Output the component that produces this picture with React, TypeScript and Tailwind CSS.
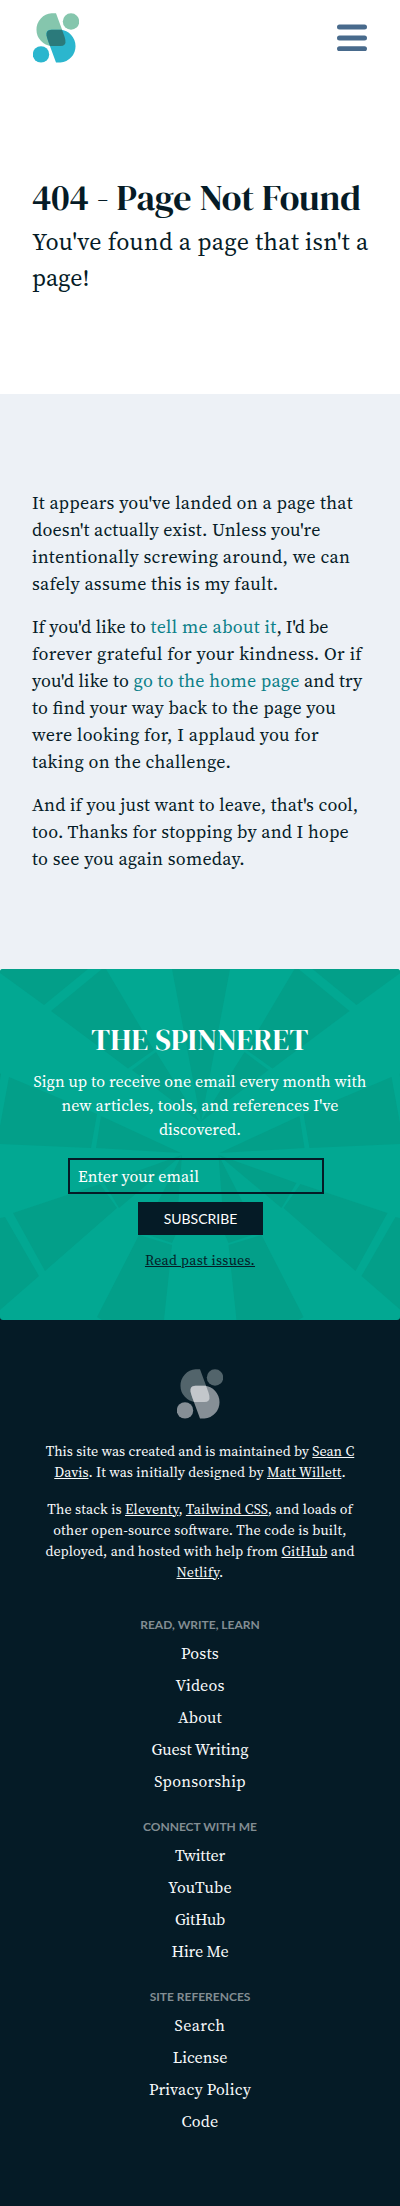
import React from "react";

const serif =
  "font-['Source_Serif_4','Liberation_Serif',serif] [font-feature-settings:'liga'_1]";

function Logo({ top, bottom, overlap }: { top: string; bottom: string; overlap: string }) {
  return (
    <svg viewBox="33 12.5 46 50" className="block h-[50px] w-[46px]" aria-hidden="true">
      <g className={top}>
        <path d="M56 12.8H51.6A16.4 16.4 0 0 0 51.6 45.5H61Q66.5 45.5 65.5 40Q65 37 62 29Z" />
        <circle cx="71" cy="21" r="8.2" />
      </g>
      <g className={bottom}>
        <path d="M56 62H60.4A16.4 16.4 0 0 0 60.4 29.3H51Q45.5 29.3 46.5 34.8Q47 37.8 50 45.8Z" />
        <circle cx="41" cy="53.9" r="8.2" />
      </g>
      <path
        className={overlap}
        d="M51.5 29.3H62Q65 37 65.4 39.5Q66.3 45.5 60.5 45.5H50Q47 37.8 46.6 35.3Q45.7 29.3 51.5 29.3Z"
      />
    </svg>
  );
}

function Line({ t, children }: { t: string; children: React.ReactNode }) {
  return <span className={`block whitespace-nowrap ${t}`}>{children}</span>;
}

const rays = [
  "0,0 88,0 44,36 0,4",
  "102,0 106,0 154,81 128,99.5 51,42",
  "132,101 156,83 200,153",
  "9,108 97,145 91,179 0,175 0,157",
  "0,104 1,105 0,111",
  "101,147 181,184 96,179",
  "104,214 182,186 119,239",
  "13,244 100,215 117,239 45,302",
  "0,249 5,248 39,307 0,341",
  "182,186 176,265 172,274 142,264",
  "139,266 172,276 164,351 102,351 97,348",
];

function Rays() {
  return (
    <svg viewBox="0 0 400 351" className="absolute inset-0 h-full w-full fill-[#039f89]" aria-hidden="true">
      {rays.map((p) => (
        <polygon key={p} points={p} />
      ))}
      <g transform="matrix(-1 0 0 1 400.5 0)">
        {rays.map((p) => (
          <polygon key={p} points={p} />
        ))}
      </g>
      <polygon points="172,0 230,0 201,153" />
    </svg>
  );
}

const sections: { title: string; links: [string, string][] }[] = [
  {
    title: "Read, Write, Learn",
    links: [
      ["Posts", "tracking-[0.2px]"],
      ["Videos", "tracking-[0.16px]"],
      ["About", "tracking-[0.2px]"],
      ["Guest Writing", "tracking-[-0.05px]"],
      ["Sponsorship", "tracking-[0.27px]"],
    ],
  },
  {
    title: "Connect With Me",
    links: [
      ["Twitter", "tracking-[-0.2px]"],
      ["YouTube", "tracking-[0.26px]"],
      ["GitHub", "tracking-[-0.28px]"],
      ["Hire Me", "tracking-[-0.17px]"],
    ],
  },
  {
    title: "Site References",
    links: [
      ["Search", "tracking-[0.45px]"],
      ["License", "tracking-[-0.08px]"],
      ["Privacy Policy", "tracking-[0.18px]"],
      ["Code", "tracking-[0.22px]"],
    ],
  },
];

export default function App() {
  return (
    <div className={`min-h-[2206px] w-full bg-white text-[#051b26] ${serif}`}>
      <header className="flex h-[75px] items-center justify-between px-[33px]">
        <Logo top="fill-[#85c6ad]" bottom="fill-[#2bb6ce]" overlap="fill-[#2b7a7b]" />
        <button aria-label="Menu">
          <svg viewBox="0 0 30 27" className="block h-[27px] w-[30px] stroke-[#486a8c]" strokeWidth="5" strokeLinecap="round">
            <path d="M2.5 3H27.5M2.5 13.9H27.5M2.5 24.7H27.5" />
          </svg>
        </button>
      </header>

      <section className="h-[319px] px-8 pt-[100px]">
        <h1 className="font-['DM_Serif_Display','Liberation_Serif',serif] text-[36px] leading-[45px] whitespace-nowrap">
          404 - Page Not Found
        </h1>
        <p className="mt-1 text-[24px] leading-[36px]">
          <Line t="tracking-[0.38px]">You've found a page that isn't a</Line>
          <Line t="tracking-normal">page!</Line>
        </p>
      </section>

      <main className="flex h-[575px] flex-col gap-4 bg-[#edf1f6] px-8 pt-[95px] text-[18px] leading-[27px]">
        <p>
          <Line t="tracking-[0.32px]">It appears you've landed on a page that</Line>
          <Line t="tracking-[0.2px]">doesn't actually exist. Unless you're</Line>
          <Line t="tracking-[0.31px]">intentionally screwing around, we can</Line>
          <Line t="tracking-[0.25px]">safely assume this is my fault.</Line>
        </p>
        <p>
          <Line t="tracking-[0.15px]">
            If you'd like to <a className="tracking-[0.35px] text-[#0a7f88]">tell me about it</a>
            <span className="tracking-[-0.1px]">, I'd be</span>
          </Line>
          <Line t="tracking-[0.36px]">forever grateful for your kindness. Or if</Line>
          <Line t="tracking-[0.18px]">
            you'd like to <a className="tracking-[0.25px] text-[#0a7f88]">go to the home page</a> and try
          </Line>
          <Line t="tracking-[0.22px]">to find your way back to the page you</Line>
          <Line t="tracking-[0.32px]">were looking for, I applaud you for</Line>
          <Line t="tracking-[0.28px]">taking on the challenge.</Line>
        </p>
        <p>
          <Line t="tracking-[0.17px]">And if you just want to leave, that's cool,</Line>
          <Line t="tracking-[0.22px]">too. Thanks for stopping by and I hope</Line>
          <Line t="tracking-[0.27px]">to see you again someday.</Line>
        </p>
      </main>

      <div className="bg-[linear-gradient(#edf1f6_50%,#051b26_50%)]">
        <section className="relative h-[351px] overflow-hidden rounded-[3px] bg-[#02a892]">
          <Rays />
          <div className="relative flex flex-col items-center pt-[53px] text-center text-white">
            <h2 className="font-['DM_Serif_Display','Liberation_Serif',serif] text-[30px] leading-[36px] tracking-[0.27px]">
              THE SPINNERET
            </h2>
            <p className="mt-[11px] text-[16px] leading-[24px]">
              <Line t="tracking-[0.07px]">Sign up to receive one email every month with</Line>
              <Line t="tracking-[0.14px]">new articles, tools, and references I've</Line>
              <Line t="tracking-normal">discovered.</Line>
            </p>
            <input
              type="email"
              placeholder="Enter your email"
              className="mt-[17px] mr-2 h-9 w-64 border-2 border-[#051b26] bg-transparent px-2 pb-px text-[16px] leading-[24px] tracking-[0.08px] placeholder:text-white placeholder:opacity-100"
            />
            <button className="mt-2 ml-px h-[33px] w-[125px] bg-[#051b26] font-['Lato',sans-serif] text-[14px] leading-[33px] text-white">
              SUBSCRIBE
            </button>
            <a className="mt-[15px] text-[14px] leading-[21px] tracking-[0.3px] text-[#051b26] underline">
              Read past issues.
            </a>
          </div>
        </section>
      </div>

      <footer className="flex h-[886px] flex-col items-center bg-[#051b26] pt-[49px] text-center text-[#f8fafb]">
        <Logo top="fill-[#52646b]" bottom="fill-[#868f96]" overlap="fill-[#c3c7cb]" />
        <div className="mt-[22px] flex flex-col gap-4 text-[14px] leading-[21px]">
          <p>
            <Line t="tracking-[0.02px]">
              This site was created and is maintained by <a className="underline">Sean C</a>
            </Line>
            <Line t="tracking-[0.07px]">
              <a className="underline">Davis</a>. It was initially designed by <a className="underline">Matt Willett</a>.
            </Line>
          </p>
          <p>
            <Line t="tracking-[0.12px]">
              The stack is <a className="underline">Eleventy</a>, <a className="underline">Tailwind CSS</a>, and loads of
            </Line>
            <Line t="tracking-[0.2px]">other open-source software. The code is built,</Line>
            <Line t="tracking-[0.11px]">
              deployed, and hosted with help from <a className="underline">GitHub</a> and
            </Line>
            <Line t="tracking-[0.2px]">
              <a className="underline">Netlify</a>.
            </Line>
          </p>
        </div>
        <nav className="mt-[33px] flex flex-col gap-[25px]">
          {sections.map((s) => (
            <div key={s.title}>
              <h3 className="font-['Lato',sans-serif] text-[12px] leading-[18px] font-bold text-[#828d92] uppercase">
                {s.title}
              </h3>
              <ul className="mt-[7px] flex flex-col gap-2 text-[16px] leading-[24px]">
                {s.links.map(([label, t]) => (
                  <li key={label} className={t}>
                    {label}
                  </li>
                ))}
              </ul>
            </div>
          ))}
        </nav>
      </footer>
    </div>
  );
}
